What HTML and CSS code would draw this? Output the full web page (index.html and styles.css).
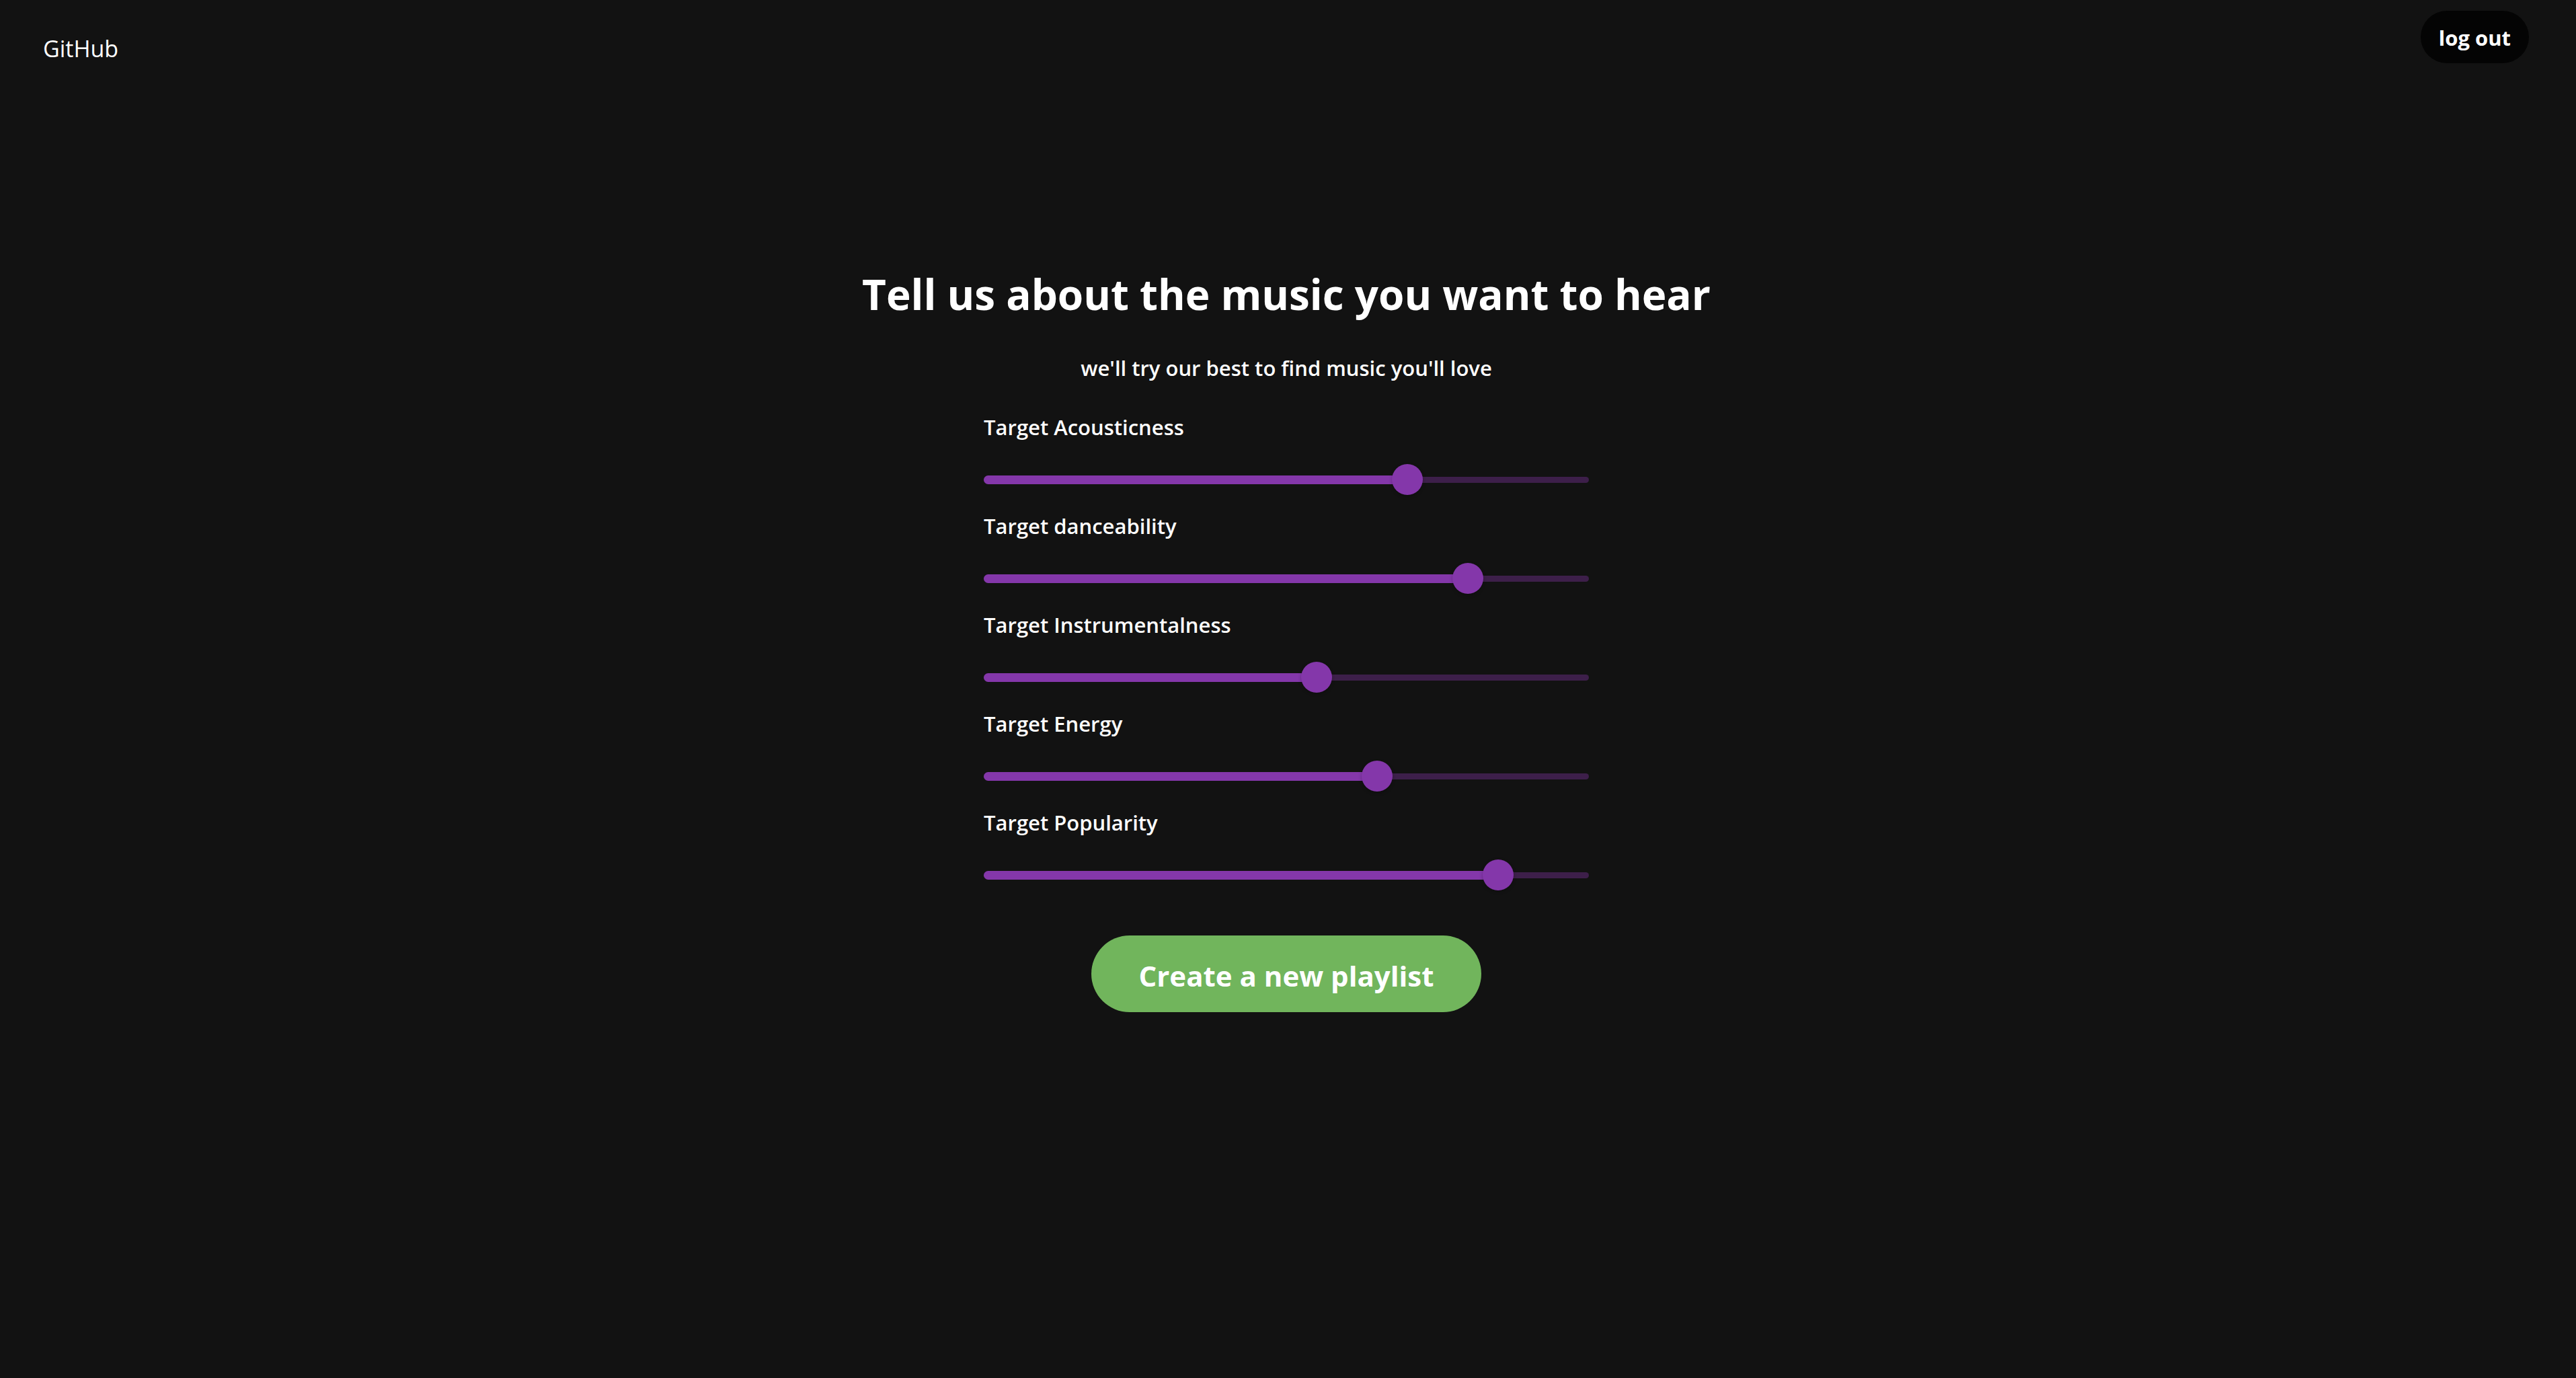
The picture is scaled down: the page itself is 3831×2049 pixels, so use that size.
FILE: index.html
```html
<!DOCTYPE html>
<html lang="en">
<head>
  <meta charset="utf-8">
  <meta name="viewport" content="width=device-width, initial-scale=1">
  <title>Create a playlist</title>
  <link rel="stylesheet" href="styles.css">
</head>
<body>
  <header class="topbar">
    <a class="topbar-link" href="#">GitHub</a>
    <button class="logout" type="button">log out</button>
  </header>

  <main class="main">
    <h1 class="title">Tell us about the music you want to hear</h1>
    <p class="subtitle">we'll try our best to find music you'll love</p>

    <form class="form">
      <div class="field">
        <label class="label" for="acousticness">Target Acousticness</label>
        <div class="slider">
          <span class="rail"></span>
          <span class="fill" style="width: 70%"></span>
          <input class="range" id="acousticness" type="range" min="0" max="100" value="70">
        </div>
      </div>
      <div class="field">
        <label class="label" for="danceability">Target danceability</label>
        <div class="slider">
          <span class="rail"></span>
          <span class="fill" style="width: 80%"></span>
          <input class="range" id="danceability" type="range" min="0" max="100" value="80">
        </div>
      </div>
      <div class="field">
        <label class="label" for="instrumentalness">Target Instrumentalness</label>
        <div class="slider">
          <span class="rail"></span>
          <span class="fill" style="width: 55%"></span>
          <input class="range" id="instrumentalness" type="range" min="0" max="100" value="55">
        </div>
      </div>
      <div class="field">
        <label class="label" for="energy">Target Energy</label>
        <div class="slider">
          <span class="rail"></span>
          <span class="fill" style="width: 65%"></span>
          <input class="range" id="energy" type="range" min="0" max="100" value="65">
        </div>
      </div>
      <div class="field">
        <label class="label" for="popularity">Target Popularity</label>
        <div class="slider">
          <span class="rail"></span>
          <span class="fill" style="width: 85%"></span>
          <input class="range" id="popularity" type="range" min="0" max="100" value="85">
        </div>
      </div>
      <button class="create" type="button">Create a new playlist</button>
    </form>
  </main>
</body>
</html>
```
FILE: styles.css
```css
:root {
  --bg: #121212;
  --accent: #8437aa;
  --rail: #3d1f4a;
  --green: #71b55c;
}

* {
  box-sizing: border-box;
}

body {
  margin: 0;
  min-height: 100vh;
  background: var(--bg);
  color: #fff;
  font-family: "Segoe UI", "Open Sans", "Noto Sans", sans-serif;
}

button {
  border: 0;
  color: inherit;
  font-family: inherit;
  font-weight: 700;
  cursor: pointer;
}

.topbar {
  display: flex;
  align-items: flex-start;
  justify-content: space-between;
  padding: 16px 70px 0 64px;
}

.topbar-link {
  padding-top: 32px;
  color: inherit;
  font-size: 34px;
  line-height: 48px;
  text-decoration: none;
}

.logout {
  padding: 16px 27px 14px;
  border-radius: 39px;
  background: #040404;
  font-size: 31px;
  line-height: 48px;
}

.main {
  display: flex;
  flex-direction: column;
  align-items: center;
  padding: 301px 5px 0 0;
}

.title {
  margin: 0 0 46px;
  font-size: 62px;
  font-weight: 700;
  line-height: 80px;
  text-align: center;
}

.subtitle {
  margin: 0 0 40px;
  font-size: 31px;
  font-weight: 600;
  line-height: 48px;
  text-align: center;
}

.form {
  display: flex;
  flex-direction: column;
  gap: 22px;
  width: 900px;
  max-width: 90%;
}

.field {
  display: flex;
  flex-direction: column;
  gap: 31px;
}

.label {
  font-size: 31px;
  font-weight: 600;
  line-height: 48px;
}

/* rail, fill and input share one grid cell */
.slider {
  display: grid;
  grid-template-columns: 100%;
  align-items: center;
  height: 46px;
}

.rail,
.fill,
.range {
  grid-area: 1 / 1;
}

.rail {
  height: 9px;
  border-radius: 5px;
  background: var(--rail);
}

.fill {
  height: 13px;
  border-radius: 7px;
  background: var(--accent);
}

/* half a thumb wider on each side, so the thumb centre runs end to end */
.range {
  width: calc(100% + 46px);
  height: 46px;
  margin: 0 -23px;
  appearance: none;
  background: transparent;
  cursor: pointer;
}

.range::-webkit-slider-thumb {
  width: 46px;
  height: 46px;
  appearance: none;
  border: 0;
  border-radius: 50%;
  background: var(--accent);
  box-shadow: 0 2px 5px rgba(0, 0, 0, 0.25);
}

.range::-moz-range-thumb {
  width: 46px;
  height: 46px;
  border: 0;
  border-radius: 50%;
  background: var(--accent);
  box-shadow: 0 2px 5px rgba(0, 0, 0, 0.25);
}

.create {
  align-self: center;
  margin-top: 45px;
  padding: 28px 71px 22px;
  border-radius: 57px;
  background: var(--green);
  font-size: 42px;
  line-height: 64px;
}
```
